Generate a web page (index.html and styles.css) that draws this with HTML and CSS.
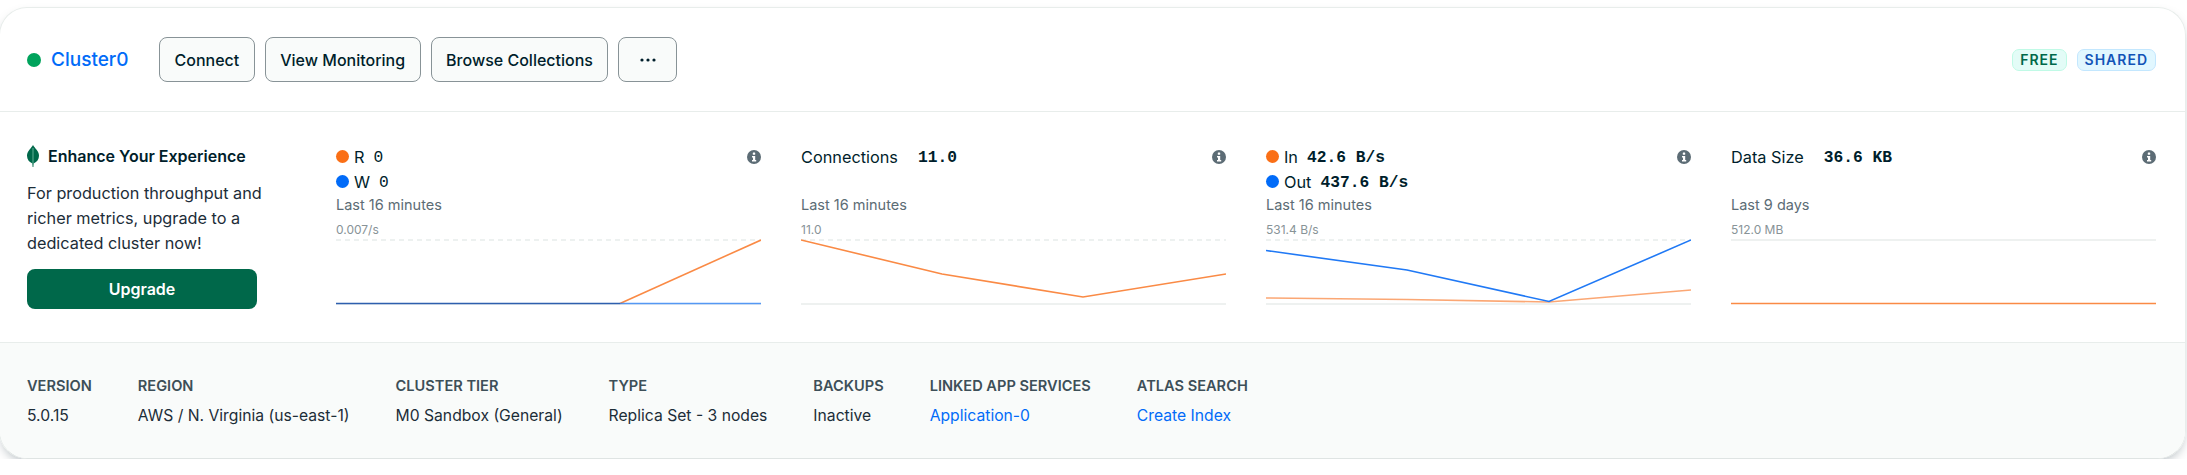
FILE: index.html
```html
<!DOCTYPE html>
<html>
<head>
    <title>Cluster0 - Atlas</title>
    <link rel="stylesheet" href="styles.css">
</head>
<body>
    <div class="card">
        <div class="header">
            <span class="status-dot"></span>
            <a class="cluster-name">Cluster0</a>
            <div class="actions">
                <button class="btn">Connect</button>
                <button class="btn">View Monitoring</button>
                <button class="btn">Browse Collections</button>
                <button class="btn btn-more">
                    <svg width="16" height="4" viewBox="0 0 16 4"><circle cx="2" cy="2" r="1.6"/><circle cx="8" cy="2" r="1.6"/><circle cx="14" cy="2" r="1.6"/></svg>
                </button>
            </div>
            <div class="badges">
                <span class="badge badge-free">FREE</span>
                <span class="badge badge-shared">SHARED</span>
            </div>
        </div>

        <div class="metrics">
            <div class="promo">
                <div class="promo-title">
                    <svg class="leaf" width="12" height="22" viewBox="0 0 12 22"><path d="M6 0C7 1.8 8.200 3 9.400 4.500C11 6.500 12 8.300 12 10.800C12 14.500 9.800 17 7 18.300C6.700 18.500 6.500 19 6.400 22H5.600C5.500 19 5.300 18.500 5 18.300C2.200 17 0 14.500 0 10.800C0 8.300 1 6.500 2.600 4.500C3.800 3 5 1.800 6 0Z"/><path class="leaf-vein" d="M6 3V19"/></svg>
                    Enhance Your Experience
                </div>
                <p class="promo-text">For production throughput and richer metrics, upgrade to a dedicated cluster now!</p>
                <button class="upgrade">Upgrade</button>
            </div>

            <div class="charts">
                <div class="chart">
                    <svg class="info" width="14" height="14" viewBox="0 0 14 14"><circle cx="7" cy="7" r="7"/><rect class="info-i" x="5.800" y="2.500" width="2.400" height="2.300" rx="0.500"/><path class="info-i" d="M5 6H8.200V10H9.200V11.500H5V10H6V7.500H5Z"/></svg>
                    <div class="chart-head">
                        <div class="legend"><span class="dot dot-orange"></span><span class="legend-label">R</span><span class="mono-light">0</span></div>
                        <div class="legend"><span class="dot dot-blue"></span><span class="legend-label">W</span><span class="mono-light">0</span></div>
                    </div>
                    <div class="period">Last 16 minutes</div>
                    <div class="axis">0.007/s</div>
                    <svg class="plot" width="425" height="66" viewBox="0 0 425 66">
                        <line class="grid-dash" x1="0" y1="1" x2="425" y2="1"/>
                        <line class="grid-line" x1="0" y1="65" x2="425" y2="65"/>
                        <polyline class="line-orange" points="284,64.500 425,1"/>
                        <polyline class="line-overlap" points="0,64.500 284,64.500"/>
                        <polyline class="line-blue line-faded" points="284,64.500 425,64.500"/>
                    </svg>
                </div>

                <div class="chart">
                    <svg class="info" width="14" height="14" viewBox="0 0 14 14"><circle cx="7" cy="7" r="7"/><rect class="info-i" x="5.800" y="2.500" width="2.400" height="2.300" rx="0.500"/><path class="info-i" d="M5 6H8.200V10H9.200V11.500H5V10H6V7.500H5Z"/></svg>
                    <div class="chart-head">
                        <div class="legend"><span class="metric-name">Connections</span><span class="mono">11.0</span></div>
                    </div>
                    <div class="period">Last 16 minutes</div>
                    <div class="axis">11.0</div>
                    <svg class="plot" width="425" height="66" viewBox="0 0 425 66">
                        <line class="grid-dash" x1="0" y1="1" x2="425" y2="1"/>
                        <line class="grid-line" x1="0" y1="65" x2="425" y2="65"/>
                        <polyline class="line-orange" points="0,1 141,35 282,58 425,35"/>
                    </svg>
                </div>

                <div class="chart">
                    <svg class="info" width="14" height="14" viewBox="0 0 14 14"><circle cx="7" cy="7" r="7"/><rect class="info-i" x="5.800" y="2.500" width="2.400" height="2.300" rx="0.500"/><path class="info-i" d="M5 6H8.200V10H9.200V11.500H5V10H6V7.500H5Z"/></svg>
                    <div class="chart-head">
                        <div class="legend"><span class="dot dot-orange"></span><span class="legend-label">In</span><span class="mono">42.6 B/s</span></div>
                        <div class="legend"><span class="dot dot-blue"></span><span class="legend-label">Out</span><span class="mono">437.6 B/s</span></div>
                    </div>
                    <div class="period">Last 16 minutes</div>
                    <div class="axis">531.4 B/s</div>
                    <svg class="plot" width="425" height="66" viewBox="0 0 425 66">
                        <line class="grid-dash" x1="0" y1="1" x2="425" y2="1"/>
                        <line class="grid-line" x1="0" y1="65" x2="425" y2="65"/>
                        <polyline class="line-orange line-faded" points="0,59 141,60.500 283,63 425,51"/>
                        <polyline class="line-blue" points="0,11.500 141,31 283,62.500 425,1"/>
                    </svg>
                </div>

                <div class="chart">
                    <svg class="info" width="14" height="14" viewBox="0 0 14 14"><circle cx="7" cy="7" r="7"/><rect class="info-i" x="5.800" y="2.500" width="2.400" height="2.300" rx="0.500"/><path class="info-i" d="M5 6H8.200V10H9.200V11.500H5V10H6V7.500H5Z"/></svg>
                    <div class="chart-head">
                        <div class="legend"><span class="metric-name">Data Size</span><span class="mono">36.6 KB</span></div>
                    </div>
                    <div class="period">Last 9 days</div>
                    <div class="axis">512.0 MB</div>
                    <svg class="plot" width="425" height="66" viewBox="0 0 425 66">
                        <line class="grid-line" x1="0" y1="1" x2="425" y2="1"/>
                        <polyline class="line-orange" points="0,64.500 425,64.500"/>
                    </svg>
                </div>
            </div>
        </div>

        <div class="footer">
            <div class="info-col"><div class="info-label">VERSION</div><div>5.0.15</div></div>
            <div class="info-col"><div class="info-label">REGION</div><div>AWS / N. Virginia (us-east-1)</div></div>
            <div class="info-col"><div class="info-label">CLUSTER TIER</div><div>M0 Sandbox (General)</div></div>
            <div class="info-col"><div class="info-label">TYPE</div><div>Replica Set - 3 nodes</div></div>
            <div class="info-col"><div class="info-label">BACKUPS</div><div>Inactive</div></div>
            <div class="info-col"><div class="info-label">LINKED APP SERVICES</div><a class="link">Application-0</a></div>
            <div class="info-col"><div class="info-label">ATLAS SEARCH</div><a class="link">Create Index</a></div>
        </div>
    </div>
</body>
</html>
```

FILE: styles.css
```css
body {
    margin: 0;
    background: #fff;
    font-family: Inter, "Noto Sans", sans-serif;
    color: #001e2b;
    overflow: hidden;
}

.card {
    width: 2187px;
    height: 452px;
    box-sizing: border-box;
    margin: 7px 0 0 -1px;
    border: 1px solid #e8edeb;
    border-bottom-color: #dfe4e3;
    border-radius: 28px;
    box-shadow: 0 5px 12px -4px rgba(0, 30, 43, 0.35);
    overflow: hidden;
    display: flex;
    flex-direction: column;
}

.header {
    height: 104px;
    box-sizing: border-box;
    flex: none;
    display: flex;
    align-items: center;
    padding: 0 29px 0 27px;
    border-bottom: 1px solid #e8edeb;
}

.status-dot {
    width: 14px;
    height: 14px;
    border-radius: 50%;
    background: #00a35c;
    margin-right: 10px;
}

.cluster-name {
    width: 108px;
    font-size: 19px;
    font-weight: 500;
    color: #016bf8;
}

.actions {
    display: flex;
    gap: 10px;
}

.btn {
    height: 45px;
    padding: 0 14.500px;
    background: #f9fbfa;
    border: 1px solid #889397;
    border-radius: 8px;
    font-family: inherit;
    font-size: 16px;
    font-weight: 500;
    color: #001e2b;
}

.btn-more {
    width: 59px;
    padding: 0;
}

.btn-more svg {
    fill: #001e2b;
    display: block;
    margin: 0 auto;
}

.badges {
    margin-left: auto;
    display: flex;
    gap: 10px;
}

.badge {
    height: 22px;
    box-sizing: border-box;
    padding: 0 7px;
    border: 1px solid;
    border-radius: 7px;
    font-size: 14px;
    font-weight: 600;
    letter-spacing: 1px;
    display: flex;
    align-items: center;
}

.badge-free {
    background: #e3fcf7;
    border-color: #c0fae6;
    color: #00684a;
}

.badge-shared {
    background: #e1f7ff;
    border-color: #c3e7fe;
    color: #1254b7;
}

.metrics {
    flex: 1;
    display: flex;
    padding: 32px 29px 0 27px;
}

.promo {
    width: 230px;
    margin-right: 79px;
    flex: none;
}

.promo-title {
    display: flex;
    align-items: center;
    gap: 9px;
    height: 24px;
    font-size: 16px;
    font-weight: 600;
    white-space: nowrap;
}

.leaf {
    fill: #00684a;
}

.leaf-vein {
    stroke: #c0fae6;
    stroke-width: 0.5;
    fill: none;
}

.promo-text {
    margin: 13px 0 13px;
    width: 250px;
    font-size: 16.250px;
    line-height: 25px;
    color: #1c2d38;
}

.upgrade {
    width: 230px;
    height: 40px;
    background: #00684a;
    border: none;
    border-radius: 8px;
    font-family: inherit;
    font-size: 16px;
    font-weight: 600;
    color: #fff;
}

.charts {
    display: grid;
    grid-template-columns: repeat(4, 425px);
    column-gap: 40px;
}

.chart {
    position: relative;
}

.info {
    position: absolute;
    top: 6px;
    right: 0;
    fill: #5c6c75;
}

.info .info-i {
    fill: #fff;
}

.chart-head {
    height: 50px;
}

.legend {
    height: 25px;
    display: flex;
    align-items: center;
    font-size: 16.300px;
    white-space: nowrap;
}

.dot {
    width: 13px;
    height: 13px;
    border-radius: 50%;
    margin-right: 5px;
}

.dot-orange {
    background: #fa6f16;
}

.dot-blue {
    background: #016bf8;
}

.legend-label {
    margin-right: 9px;
}

.metric-name {
    margin-right: 20px;
}

.mono,
.mono-light {
    padding-top: 1px;
    font-family: "Liberation Mono", monospace;
    font-size: 16.250px;
    white-space: pre;
}

.mono {
    font-weight: 700;
}

.period {
    height: 22px;
    line-height: 22px;
    font-size: 14.500px;
    color: #5c6c75;
}

.axis {
    height: 23px;
    line-height: 28px;
    font-size: 12px;
    color: #889397;
}

.plot {
    display: block;
    fill: none;
}

.grid-dash {
    stroke: #e8edeb;
    stroke-width: 1.500;
    stroke-dasharray: 5 4;
}

.grid-line {
    stroke: #e8edeb;
    stroke-width: 1.500;
}

.line-orange {
    stroke: #fa8a45;
    stroke-width: 1.600;
}

.line-faded {
    opacity: 0.75;
}

.line-blue {
    stroke: #2079f5;
    stroke-width: 1.600;
}

.line-overlap {
    stroke: #2e5fae;
    stroke-width: 1.600;
}

.footer {
    height: 116px;
    box-sizing: border-box;
    flex: none;
    display: flex;
    gap: 46px;
    padding: 32px 27px 0;
    background: #f9fbfa;
    border-top: 1px solid #e8edeb;
    font-size: 15.700px;
    color: #1c2d38;
}

.info-label {
    height: 31px;
    line-height: 22px;
    font-weight: 600;
    font-size: 14.600px;
    color: #3d4f58;
    white-space: nowrap;
}

.info-col div:last-child,
.link {
    white-space: nowrap;
}

.link {
    color: #016bf8;
}
```
